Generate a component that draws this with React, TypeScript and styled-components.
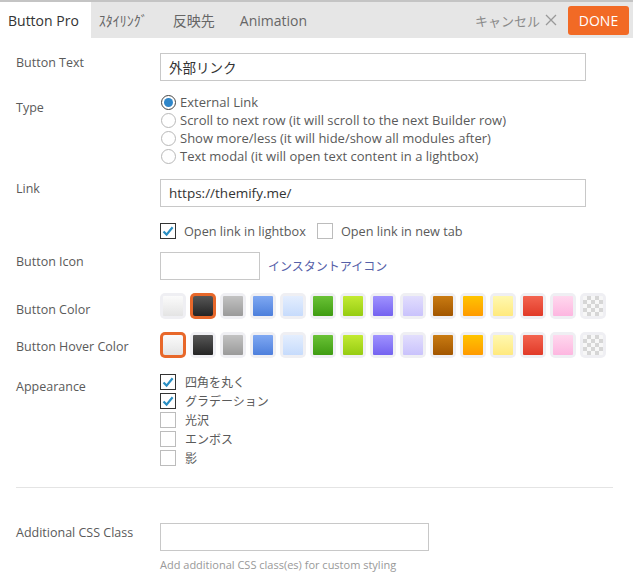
import styled, { createGlobalStyle } from 'styled-components';

const GlobalStyle = createGlobalStyle`
  html, body {
    margin: 0;
    padding: 0;
    background: #ffffff;
  }
  body {
    font-family: 'Open Sans', 'Noto Sans CJK JP', sans-serif;
    color: #5a5a5a;
  }
`;

const Panel = styled.div`
  width: 633px;
  height: 588px;
  background: #fff;
  overflow: hidden;
`;

const TopBar = styled.div`
  display: flex;
  align-items: stretch;
  height: 36px;
  border-top: 2px solid #c4c4c4;
  background: #e6e6e6;
`;

const Tabs = styled.div`
  display: flex;
  flex: 1;
`;

const Tab = styled.div<{ $active?: boolean }>`
  display: flex;
  align-items: center;
  padding: 0 ${(p) => (p.$active ? 12 : 17)}px 0 8px;
  font-size: 14px;
  color: ${(p) => (p.$active ? '#333' : '#666')};
  background: ${(p) => (p.$active ? '#fff' : 'transparent')};
`;

const Actions = styled.div`
  display: flex;
  align-items: center;
  gap: 11px;
  padding-right: 4px;
`;

const Cancel = styled.span`
  display: flex;
  align-items: center;
  gap: 5px;
  font-size: 13px;
  color: #8a8a8a;
`;

const DoneButton = styled.button`
  height: 29px;
  width: 61px;
  border: none;
  border-radius: 3px;
  background: #f26a25;
  color: #fff;
  font-family: 'Open Sans', sans-serif;
  font-size: 14px;
  padding: 0;
`;

const Body = styled.div`
  padding: 15px 0 0 16px;
  font-size: 12.5px;
`;

const FieldRow = styled.div<{ $gap: number; $top?: number }>`
  display: grid;
  grid-template-columns: 144px 1fr;
  margin-top: ${(p) => p.$top ?? 0}px;
  margin-bottom: ${(p) => p.$gap}px;
`;

const Label = styled.div<{ $top: number }>`
  padding-top: ${(p) => p.$top}px;
  line-height: 16px;
  color: #5a5a5a;
`;

const TextInput = styled.div<{ $width: number }>`
  box-sizing: border-box;
  width: ${(p) => p.$width}px;
  height: 28px;
  border: 1px solid #c8c8c8;
  padding: 0 8px;
  display: flex;
  align-items: center;
  color: #333;
  font-size: 13.5px;
`;

const RadioList = styled.div`
  display: flex;
  flex-direction: column;
`;

const OptionLine = styled.label`
  display: flex;
  align-items: center;
  height: 18px;
  gap: 4px;
  font-size: 13px;
  color: #5a5a5a;
`;

const RadioDot = styled.span<{ $checked?: boolean }>`
  box-sizing: border-box;
  width: 15px;
  height: 15px;
  margin-left: 1px;
  border-radius: 50%;
  border: 1px solid ${(p) => (p.$checked ? '#444' : '#b8b8b8')};
  display: flex;
  align-items: center;
  justify-content: center;
  &::after {
    content: '';
    width: 9px;
    height: 9px;
    border-radius: 50%;
    background: ${(p) => (p.$checked ? '#2f86c9' : 'transparent')};
  }
`;

const CheckRow = styled.div`
  display: flex;
  align-items: center;
  height: 20px;
  margin-top: 14px;
`;

const CheckItem = styled.label`
  display: flex;
  align-items: center;
  gap: 8px;
  margin-right: 11px;
  font-size: 12.7px;
  color: #5a5a5a;
`;

const Box = styled.span<{ $checked?: boolean }>`
  box-sizing: border-box;
  width: 16px;
  height: 16px;
  border: 1px solid ${(p) => (p.$checked ? '#333' : '#bcbcbc')};
  display: flex;
  align-items: center;
  justify-content: center;
  flex-shrink: 0;
`;

const Check = ({ on }: { on?: boolean }) => (
  <Box $checked={on}>
    {on && (
      <svg width="12" height="12" viewBox="0 0 12 12">
        <path d="M1.5 6.5 L4.6 9.6 L10.6 2.2" fill="none" stroke="#2a8fc4" strokeWidth="2.2" />
      </svg>
    )}
  </Box>
);

const IconRow = styled.div`
  display: flex;
  align-items: center;
  gap: 8px;
`;

const IconLink = styled.a`
  font-size: 12px;
  color: #5560a8;
  text-decoration: none;
`;

const Swatches = styled.div`
  display: flex;
  gap: 4px;
`;

const Swatch = styled.span<{ $selected?: boolean; $bg: string }>`
  box-sizing: border-box;
  width: 26px;
  height: 26px;
  padding: 3px;
  border-radius: 5px;
  background: ${(p) => (p.$selected ? '#e8682a' : '#efeff3')};
  &::after {
    content: '';
    display: block;
    width: 20px;
    height: 20px;
    border-radius: ${(p) => (p.$selected ? '2px' : '1px')};
    background: ${(p) => p.$bg};
  }
`;

const AppearanceList = styled.div`
  display: flex;
  flex-direction: column;
`;

const AppearanceLine = styled.label`
  display: flex;
  align-items: center;
  gap: 9px;
  height: 19px;
  color: #5a5a5a;
  font-size: 12px;
`;

const Divider = styled.hr`
  border: none;
  border-top: 1px solid #e4e4e4;
  margin: 0 20px 0 0;
`;

const HelpText = styled.div`
  margin-top: 6px;
  font-size: 11px;
  color: #999;
`;

const grad = (a: string, b: string) => `linear-gradient(to bottom, ${a}, ${b})`;

const swatchColors: string[] = [
  grad('#fbfbfb', '#e4e4e4'),
  grad('#575757', '#242424'),
  grad('#c2c2c2', '#9a9a9a'),
  grad('#7fa8f2', '#4d7fdc'),
  grad('#e4eefe', '#c6dbfc'),
  grad('#6ac236', '#3f9c12'),
  grad('#c2ea32', '#96cc12'),
  grad('#9f92ff', '#7462f0'),
  grad('#e2defd', '#c9c2fc'),
  grad('#c97b12', '#a25600'),
  grad('#ffc400', '#ff9a00'),
  grad('#fff8b0', '#ffe97e'),
  grad('#f36450', '#e13a28'),
  grad('#ffd8ee', '#fdb6e0'),
  'repeating-conic-gradient(#d6d6d6 0% 25%, #f7f7f7 0% 50%) 0 0 / 8px 8px',
];

const ColorPicker = ({ selected }: { selected: number }) => (
  <Swatches>
    {swatchColors.map((c, i) => (
      <Swatch key={i} $bg={c} $selected={i === selected} />
    ))}
  </Swatches>
);

export default function App() {
  return (
    <Panel>
      <GlobalStyle />
      <TopBar>
        <Tabs>
          <Tab $active>Button Pro</Tab>
          <Tab>ｽﾀｲﾘﾝｸﾞ</Tab>
          <Tab>反映先</Tab>
          <Tab>Animation</Tab>
        </Tabs>
        <Actions>
          <Cancel>
            キャンセル
            <svg width="12" height="12" viewBox="0 0 12 12">
              <path d="M1 1 L11 11 M11 1 L1 11" stroke="#999" strokeWidth="1.3" />
            </svg>
          </Cancel>
          <DoneButton>DONE</DoneButton>
        </Actions>
      </TopBar>

      <Body>
        <FieldRow $gap={12}>
          <Label $top={2}>Button Text</Label>
          <TextInput $width={426}>外部リンク</TextInput>
        </FieldRow>

        <FieldRow $gap={14}>
          <Label $top={7}>Type</Label>
          <RadioList>
            <OptionLine>
              <RadioDot $checked />
              External Link
            </OptionLine>
            <OptionLine>
              <RadioDot />
              Scroll to next row (it will scroll to the next Builder row)
            </OptionLine>
            <OptionLine>
              <RadioDot />
              Show more/less (it will hide/show all modules after)
            </OptionLine>
            <OptionLine>
              <RadioDot />
              Text modal (it will open text content in a lightbox)
            </OptionLine>
          </RadioList>
        </FieldRow>

        <FieldRow $gap={0}>
          <Label $top={2}>Link</Label>
          <div>
            <TextInput $width={426}>https://themify.me/</TextInput>
            <CheckRow>
              <CheckItem>
                <Check on />
                Open link in lightbox
              </CheckItem>
              <CheckItem>
                <Check />
                Open link in new tab
              </CheckItem>
            </CheckRow>
          </div>
        </FieldRow>

        <FieldRow $gap={13} $top={11}>
          <Label $top={2}>Button Icon</Label>
          <IconRow>
            <TextInput $width={100} />
            <IconLink>インスタントアイコン</IconLink>
          </IconRow>
        </FieldRow>

        <FieldRow $gap={13}>
          <Label $top={9}>Button Color</Label>
          <ColorPicker selected={1} />
        </FieldRow>

        <FieldRow $gap={14}>
          <Label $top={7}>Button Hover Color</Label>
          <ColorPicker selected={0} />
        </FieldRow>

        <FieldRow $gap={20}>
          <Label $top={7}>Appearance</Label>
          <AppearanceList>
            <AppearanceLine>
              <Check on />
              四角を丸く
            </AppearanceLine>
            <AppearanceLine>
              <Check on />
              グラデーション
            </AppearanceLine>
            <AppearanceLine>
              <Check />
              光沢
            </AppearanceLine>
            <AppearanceLine>
              <Check />
              エンボス
            </AppearanceLine>
            <AppearanceLine>
              <Check />
              影
            </AppearanceLine>
          </AppearanceList>
        </FieldRow>

        <Divider />

        <FieldRow $gap={0} $top={35}>
          <Label $top={2}>Additional CSS Class</Label>
          <div>
            <TextInput $width={269} />
            <HelpText>Add additional CSS class(es) for custom styling</HelpText>
          </div>
        </FieldRow>
      </Body>
    </Panel>
  );
}
